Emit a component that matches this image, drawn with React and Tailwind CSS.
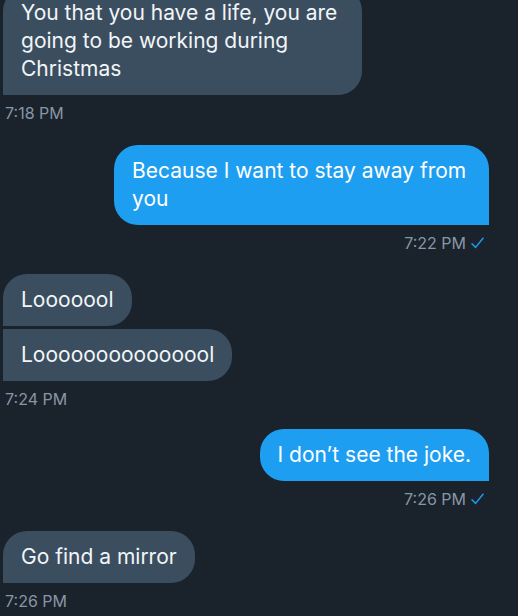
import React from "react";

const font = { fontFamily: 'Inter, "Liberation Sans", Arial, sans-serif' };

function Check() {
  return (
    <svg width="13" height="12" viewBox="0 0 13 12" className="ml-[5px]" fill="none">
      <path d="M1 6.8 L4.6 10.4 L12 1.2" stroke="#1d9bf0" strokeWidth="1.5" strokeLinecap="round" strokeLinejoin="round" />
    </svg>
  );
}

function Received({ children, className = "" }) {
  return (
    <div className={`bg-[#3b4e60] text-[#f2f5f7] text-[21px] leading-[28px] px-[18px] py-[12px] ${className}`}>
      {children}
    </div>
  );
}

function Sent({ children, className = "" }) {
  return (
    <div className={`bg-[#1e9ef0] text-white text-[21px] leading-[28px] px-[18px] py-[12px] rounded-[24px] rounded-br-none ${className}`}>
      {children}
    </div>
  );
}

function TimeL({ t }) {
  return <div className="mt-[8px] ml-[5px] text-[16px] leading-[20px] text-[#8796a5]">{t}</div>;
}

function TimeR({ t }) {
  return (
    <div className="mt-[8px] mr-[34px] self-end flex items-center text-[16px] leading-[20px] text-[#8796a5]">
      {t}
      <Check />
    </div>
  );
}

export default function App() {
  return (
    <div className="w-[518px] h-[616px] overflow-hidden bg-[#1a222c] flex flex-col" style={font}>
      <div className="flex flex-col items-start pl-[3px] -mt-[13px]">
        <Received className="w-[359px] rounded-[24px] rounded-bl-none">
          You that you have a life, you are going to be working during Christmas
        </Received>
      </div>
      <TimeL t="7:18 PM" />

      <div className="flex flex-col items-end pr-[29px] mt-[22px]">
        <Sent className="w-[375px]">Because I want to stay away from you</Sent>
      </div>
      <TimeR t="7:22 PM" />

      <div className="flex flex-col items-start gap-[3px] pl-[3px] mt-[21px]">
        <Received className="rounded-[24px] rounded-bl-none">Looooool</Received>
        <Received className="rounded-r-[24px]">Looooooooooooool</Received>
      </div>
      <TimeL t="7:24 PM" />

      <div className="flex flex-col items-end pr-[29px] mt-[20px]">
        <Sent>I don’t see the joke.</Sent>
      </div>
      <TimeR t="7:26 PM" />

      <div className="flex flex-col items-start pl-[3px] mt-[22px]">
        <Received className="rounded-[24px] rounded-bl-none">Go find a mirror</Received>
      </div>
      <TimeL t="7:26 PM" />
    </div>
  );
}
